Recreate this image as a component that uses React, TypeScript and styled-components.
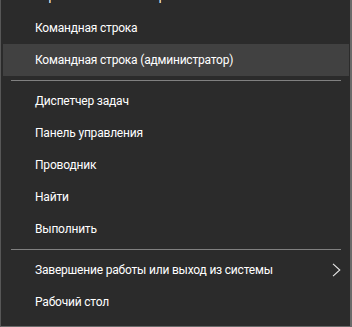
import React from "react";
import styled, { createGlobalStyle } from "styled-components";

const Global = createGlobalStyle`
  html, body { margin: 0; padding: 0; background: #2b2b2b; overflow: hidden; }
  * { box-sizing: border-box; }
`;

const Viewport = styled.div`
  width: 352px;
  height: 327px;
  overflow: hidden;
`;

const Menu = styled.div`
  margin-top: -20px;
  width: 352px;
  background: #2b2b2b;
  border-left: 1px solid #575757;
  border-right: 2px solid #6a6a6a;
  border-bottom: 1px solid #6a6a6a;
  padding: 0 1px 8px 2px;
  display: flex;
  flex-direction: column;
  font-family: Roboto, "Noto Sans", sans-serif;
  font-size: 12px;
  letter-spacing: -0.2px;
  color: #ffffff;
`;

const Row = styled.div<{ $active?: boolean }>`
  height: 32px;
  display: flex;
  align-items: center;
  justify-content: space-between;
  padding: 0 8px 0 32px;
  background: ${(p) => (p.$active ? "#414141" : "transparent")};
  white-space: nowrap;
`;

const Label = styled.span`
  line-height: 1;
`;

const Separator = styled.div`
  padding: 4px 8px 4px 8px;
  &::after {
    content: "";
    display: block;
    height: 1px;
    background: #808080;
  }
`;

const Chevron = () => (
  <svg width="9" height="14" viewBox="0 0 9 14" fill="none">
    <path d="M1 0.8 L7.8 7 L1 13.2" stroke="#e8e8e8" strokeWidth="1.1" />
  </svg>
);

type Item = { label: string; active?: boolean; sub?: boolean } | "sep";

const items: Item[] = [
  { label: "Управление компьютером" },
  { label: "Командная строка" },
  { label: "Командная строка (администратор)", active: true },
  "sep",
  { label: "Диспетчер задач" },
  { label: "Панель управления" },
  { label: "Проводник" },
  { label: "Найти" },
  { label: "Выполнить" },
  "sep",
  { label: "Завершение работы или выход из системы", sub: true },
  { label: "Рабочий стол" },
];

export default function App() {
  return (
    <Viewport>
      <Global />
      <Menu>
        {items.map((it, i) =>
          it === "sep" ? (
            <Separator key={i} />
          ) : (
            <Row key={i} $active={it.active}>
              <Label>{it.label}</Label>
              {it.sub && <Chevron />}
            </Row>
          )
        )}
      </Menu>
    </Viewport>
  );
}
